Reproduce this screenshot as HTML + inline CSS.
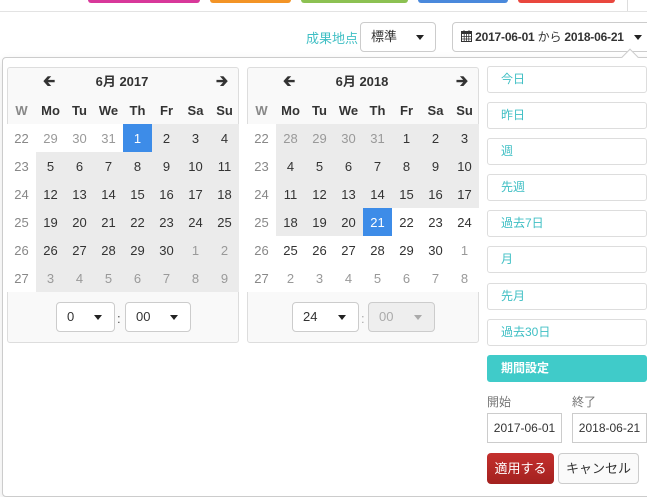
<!DOCTYPE html>
<html><head><meta charset="utf-8">
<style>
*{box-sizing:border-box;margin:0;padding:0}
body{width:647px;height:485px;overflow:hidden;background:#fff;font-family:"Liberation Sans","Noto Sans CJK JP",sans-serif;font-size:13px;color:#333;position:relative}
.a{position:absolute}
.bar{position:absolute;top:0;height:3px;border-radius:0 0 3px 3px}
.sel{position:absolute;border:1px solid #ccc;border-radius:4px;background:#fff;font-size:13px}
.caret{position:absolute;width:0;height:0;border-left:4px solid transparent;border-right:4px solid transparent;border-top:5px solid #222}
.cal{position:absolute;top:67px;width:232px;height:276px;border:1px solid #ddd;border-radius:3px;background:#f9f9f9}
table{border-collapse:collapse;table-layout:fixed;width:230px;position:absolute;left:0;top:29px}
td{width:29px;height:28px;text-align:center;font-size:13px;padding:0}
tr.h td{font-weight:bold;font-size:13px}
td.w{color:#888}
tr.h td.w{color:#888}
td.g{background:#ebebeb}
td.o{color:#999}
td.b{background:#3d8ce8;color:#fff}
.hd{position:absolute;top:0;left:0;width:230px;height:29px;font-weight:bold;font-size:13px;text-align:center;line-height:29px}
.ar{position:absolute;top:0;line-height:29px;font-size:15px;font-weight:bold}
.tw{position:absolute;top:-1px;left:-1px;width:232px;height:276px}
.rg{position:absolute;left:487px;width:160px;height:27px;border:1px solid #ddd;border-radius:3px;background:#fff;color:#3fbfc4;font-size:12px;line-height:25px;padding-left:13px}
</style></head><body>
<div class="bar" style="left:88px;width:112px;background:#d8389a"></div>
<div class="bar" style="left:210px;width:81px;background:#f39426"></div>
<div class="bar" style="left:301px;width:107px;background:#8cc152"></div>
<div class="bar" style="left:418px;width:90px;background:#4a89dc"></div>
<div class="bar" style="left:518px;width:97px;background:#e9473e"></div>
<div class="a" style="left:627px;top:0;width:1px;height:11px;background:#ddd"></div>
<div class="a" style="left:0;top:11px;width:647px;height:1px;background:#e3e3e3"></div>

<div class="a" style="left:306px;top:28px;color:#3fbfc4;font-size:13px">成果地点</div>
<div class="sel" style="left:360px;top:22px;width:76px;height:30px;line-height:28px;padding-left:10px">標準</div>
<div class="caret" style="left:416px;top:35px"></div>
<div class="sel" style="left:452px;top:22px;width:200px;height:30px;line-height:28px;padding-left:8px;font-weight:bold;font-size:12px;letter-spacing:-0.2px;white-space:nowrap">
<svg width="11" height="12" viewBox="0 0 11 12" style="vertical-align:-1px"><rect x="0.5" y="1.5" width="10" height="10" fill="none" stroke="#333"/><rect x="0.5" y="1.5" width="10" height="2.5" fill="#333"/><path d="M3 0v3M8 0v3M0 6.5h11M0 9h11M3.2 4v8M5.5 4v8M7.8 4v8" stroke="#333" stroke-width="0.8"/></svg>
2017-06-01 <span style="font-weight:normal">から</span> 2018-06-21</div>
<div class="caret" style="left:634px;top:35px"></div>

<div class="a" style="left:2px;top:57px;width:660px;height:440px;border:1px solid #ccc;border-radius:4px;background:#fff;box-shadow:0 4px 10px rgba(0,0,0,.1)"></div>
<div class="a" style="left:624px;top:51px;width:12px;height:12px;background:#fff;border-left:1px solid #ccc;border-top:1px solid #ccc;transform:rotate(45deg)"></div>

<div class="cal" style="left:7px">
<div class="tw">
<div class="hd">6月 2017</div>
<div class="ar" style="left:36px">&#129136;</div>
<div class="ar" style="left:209px">&#129138;</div>
<table>
<tr class="h"><td class="w">W</td><td>Mo</td><td>Tu</td><td>We</td><td>Th</td><td>Fr</td><td>Sa</td><td>Su</td></tr>
<tr style="background:#fff"><td class="w">22</td><td class="o">29</td><td class="o">30</td><td class="o">31</td><td class="b">1</td><td class="g">2</td><td class="g">3</td><td class="g">4</td></tr>
<tr style="background:#fff"><td class="w">23</td><td class="g">5</td><td class="g">6</td><td class="g">7</td><td class="g">8</td><td class="g">9</td><td class="g">10</td><td class="g">11</td></tr>
<tr style="background:#fff"><td class="w">24</td><td class="g">12</td><td class="g">13</td><td class="g">14</td><td class="g">15</td><td class="g">16</td><td class="g">17</td><td class="g">18</td></tr>
<tr style="background:#fff"><td class="w">25</td><td class="g">19</td><td class="g">20</td><td class="g">21</td><td class="g">22</td><td class="g">23</td><td class="g">24</td><td class="g">25</td></tr>
<tr style="background:#fff"><td class="w">26</td><td class="g">26</td><td class="g">27</td><td class="g">28</td><td class="g">29</td><td class="g">30</td><td class="g o">1</td><td class="g o">2</td></tr>
<tr style="background:#fff"><td class="w">27</td><td class="g o">3</td><td class="g o">4</td><td class="g o">5</td><td class="g o">6</td><td class="g o">7</td><td class="g o">8</td><td class="g o">9</td></tr>
</table>
</div>
</div>
<div class="sel" style="left:56px;top:302px;width:59px;height:30px;line-height:28px;padding-left:10px">0</div>
<div class="caret" style="left:94px;top:315px"></div>
<div class="a" style="left:117px;top:311px;color:#555">:</div>
<div class="sel" style="left:125px;top:302px;width:66px;height:30px;line-height:28px;padding-left:10px">00</div>
<div class="caret" style="left:170px;top:315px"></div>

<div class="cal" style="left:247px">
<div class="tw">
<div class="hd">6月 2018</div>
<div class="ar" style="left:36px">&#129136;</div>
<div class="ar" style="left:209px">&#129138;</div>
<table>
<tr class="h"><td class="w">W</td><td>Mo</td><td>Tu</td><td>We</td><td>Th</td><td>Fr</td><td>Sa</td><td>Su</td></tr>
<tr style="background:#fff"><td class="w">22</td><td class="g o">28</td><td class="g o">29</td><td class="g o">30</td><td class="g o">31</td><td class="g">1</td><td class="g">2</td><td class="g">3</td></tr>
<tr style="background:#fff"><td class="w">23</td><td class="g">4</td><td class="g">5</td><td class="g">6</td><td class="g">7</td><td class="g">8</td><td class="g">9</td><td class="g">10</td></tr>
<tr style="background:#fff"><td class="w">24</td><td class="g">11</td><td class="g">12</td><td class="g">13</td><td class="g">14</td><td class="g">15</td><td class="g">16</td><td class="g">17</td></tr>
<tr style="background:#fff"><td class="w">25</td><td class="g">18</td><td class="g">19</td><td class="g">20</td><td class="b">21</td><td>22</td><td>23</td><td>24</td></tr>
<tr style="background:#fff"><td class="w">26</td><td>25</td><td>26</td><td>27</td><td>28</td><td>29</td><td>30</td><td class="o">1</td></tr>
<tr style="background:#fff"><td class="w">27</td><td class="o">2</td><td class="o">3</td><td class="o">4</td><td class="o">5</td><td class="o">6</td><td class="o">7</td><td class="o">8</td></tr>
</table>
</div>
</div>
<div class="sel" style="left:292px;top:302px;width:67px;height:30px;line-height:28px;padding-left:10px">24</div>
<div class="caret" style="left:338px;top:315px"></div>
<div class="a" style="left:361px;top:311px;color:#aaa">:</div>
<div class="sel" style="left:368px;top:302px;width:67px;height:30px;line-height:28px;padding-left:10px;background:#eee;color:#aaa">00</div>
<div class="caret" style="left:414px;top:315px;border-top-color:#aaa"></div>

<div class="rg" style="top:66px">今日</div>
<div class="rg" style="top:102px">昨日</div>
<div class="rg" style="top:138px">週</div>
<div class="rg" style="top:174px">先週</div>
<div class="rg" style="top:210px">過去7日</div>
<div class="rg" style="top:246px">月</div>
<div class="rg" style="top:283px">先月</div>
<div class="rg" style="top:319px">過去30日</div>
<div class="rg" style="top:355px;background:#40cbc9;border-color:#40cbc9;color:#fff;font-weight:bold">期間設定</div>

<div class="a" style="left:487px;top:393px;font-size:12px;color:#777">開始</div>
<div class="a" style="left:572px;top:393px;font-size:12px;color:#777">終了</div>
<div class="a" style="left:487px;top:413px;width:75px;height:30px;border:1px solid #ccc;font-size:12px;line-height:28px;text-align:center">2017-06-01</div>
<div class="a" style="left:572px;top:413px;width:75px;height:30px;border:1px solid #ccc;font-size:12px;line-height:28px;text-align:center">2018-06-21</div>
<div class="a" style="left:487px;top:453px;width:67px;height:31px;border-radius:4px;background:linear-gradient(#c4302e,#a3211f);color:#fff;font-size:13px;line-height:31px;text-align:center">適用する</div>
<div class="a" style="left:558px;top:453px;width:81px;height:31px;border:1px solid #ccc;border-radius:4px;background:#fafafa;color:#333;font-size:13px;line-height:29px;text-align:center">キャンセル</div>
</body></html>
